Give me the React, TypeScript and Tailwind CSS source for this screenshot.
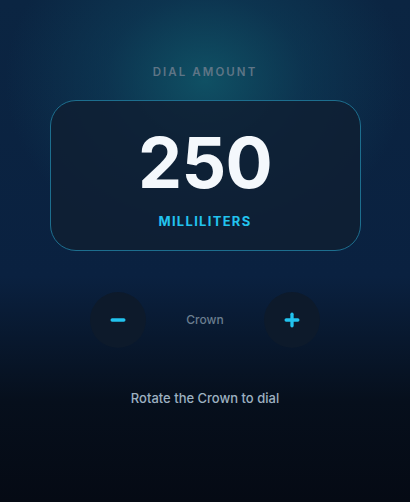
import { Minus, Plus } from "lucide-react";

export default function App() {
  return (
    <div
      className="relative w-[410px] h-[502px] overflow-hidden bg-[linear-gradient(180deg,#0b2542_0%,#0a2140_55%,#060f1c_80%,#050a14_100%)]"
      style={{ fontFamily: "Inter, 'Noto Sans', sans-serif" }}
    >
      <div className="absolute inset-0 bg-[radial-gradient(ellipse_200px_170px_at_205px_80px,rgba(16,88,106,0.85)_0%,rgba(14,70,96,0.45)_50%,rgba(11,37,66,0)_100%)]" />
      <div className="relative flex flex-col items-center pt-[65px]">
        <div className="text-[11.5px] font-semibold tracking-[0.18em] text-[#5f7586] leading-[14px]">
          DIAL AMOUNT
        </div>

        <div className="mt-[21px] w-[311px] h-[151px] rounded-[26px] border-[1.5px] border-[#1d6e8e] bg-[#0f1f33]/85 flex flex-col items-center">
          <div className="mt-[26px] text-[70px] font-bold leading-[72px] text-[#f4f8fc] tracking-[-0.01em]">
            250
          </div>
          <div className="mt-[14px] text-[13px] font-bold tracking-[0.1em] text-[#22c3ee] leading-[16px]">
            MILLILITERS
          </div>
        </div>

        <div className="mt-[41px] flex items-center gap-[30px]">
          <button className="w-[56px] h-[56px] rounded-full bg-[#0d1a2b] flex items-center justify-center text-[#22c3ee]">
            <Minus size={20} strokeWidth={4} />
          </button>
          <div className="w-[58px] text-center text-[12px] font-medium text-[#6b7e8f]">Crown</div>
          <button className="w-[56px] h-[56px] rounded-full bg-[#0d1a2b] flex items-center justify-center text-[#22c3ee]">
            <Plus size={20} strokeWidth={4} />
          </button>
        </div>

        <div className="mt-[41px] text-[13px] font-medium text-[#9db1c1]">Rotate the Crown to dial</div>
      </div>
    </div>
  );
}
